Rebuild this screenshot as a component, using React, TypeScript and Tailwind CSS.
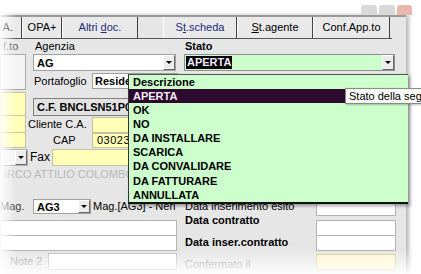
import React from "react";

const font = "font-['Liberation_Sans','Arial',sans-serif]";

function Arrow({ className = "" }: { className?: string }) {
  return (
    <div
      className={`flex w-[12px] shrink-0 items-center justify-center border border-t-white border-l-white border-b-[#6a6a6a] border-r-[#6a6a6a] bg-[#ececec] ${className}`}
    >
      <div className="h-0 w-0 border-x-[3px] border-t-[3px] border-x-transparent border-t-black" />
    </div>
  );
}

function ToolBtn({ className, children }: { className: string; children: React.ReactNode }) {
  return (
    <div
      className={`flex h-full shrink-0 items-center justify-center border-l border-r border-l-white border-r-[#404040] bg-[#e9e9e9] ${className}`}
    >
      <span className="whitespace-pre">{children}</span>
    </div>
  );
}

const statoOptions = [
  "OK",
  "NO",
  "DA INSTALLARE",
  "SCARICA",
  "DA CONVALIDARE",
  "DA FATTURARE",
  "ANNULLATA",
];

export default function App() {
  return (
    <div className={`relative h-[274px] w-[421px] overflow-hidden bg-white text-[11px] leading-none text-black ${font}`}>
      {/* caption buttons */}
      <div className="flex h-[15px] justify-end gap-[2px] pr-[9px] pt-[5px]">
        <div className="h-[10px] w-[16px] rounded-t-[3px] bg-[#d9d9d9]" />
        <div className="h-[10px] w-[16px] rounded-t-[3px] bg-[#d9d9d9]" />
        <div className="h-[10px] w-[15px] rounded-t-[3px] bg-[#e9b7ad]" />
      </div>

      {/* window */}
      <div className="h-[259px] w-[406px] border-t-[2px] border-[#9a9a9a] bg-[#e6e6e6] shadow-[3px_0_4px_rgba(0,0,0,0.28)]">
        {/* toolbar */}
        <div className="flex h-[22px] w-[392px] border-b border-[#555]">
          <ToolBtn className="w-[22px] justify-end pr-[8px]">A.</ToolBtn>
          <ToolBtn className="w-[40px]">OPA+</ToolBtn>
          <ToolBtn className="w-[76px] text-[#232a7a]">
            Altri <span className="underline">d</span>oc.
          </ToolBtn>
          <div className="w-[25px] shrink-0" />
          <ToolBtn className="w-[74px] text-[#232a7a]">
            S<span className="underline">t</span>.scheda
          </ToolBtn>
          <ToolBtn className="w-[76px]">
            <span className="underline">S</span>t.agente
          </ToolBtn>
          <ToolBtn className="w-[77px]">Conf.App.to</ToolBtn>
        </div>

        {/* form */}
        <div className="flex">
          {/* left column */}
          <div className="flex w-[181px] shrink-0 flex-col">
            <div className="flex h-[15px] items-center">
              <span className="w-[33px] pl-[3px] text-[#555]">f.to</span>
              <span className="pl-[2px]">Agenzia</span>
            </div>
            <div className="flex h-[18px]">
              <div className="w-[26px] border-x border-t border-[#a8a8a8] bg-[#f4f4f4]" />
              <div className="ml-[7px] flex h-[17px] w-[143px] border border-[#a0a0a0] bg-white">
                <span className="flex-1 pl-[3px] pt-[3px] font-bold">AG</span>
                <Arrow />
              </div>
            </div>
            <div className="flex h-[18px] items-center">
              <div className="h-full w-[26px] border-x border-b border-[#a8a8a8] bg-[#f4f4f4]" />
              <span className="w-[66px] whitespace-nowrap pl-[8px]">Portafoglio</span>
              <div className="flex h-[16px] w-[86px] items-center border border-[#a0a0a0] bg-white pl-[2px] font-bold">
                Residenziale
              </div>
            </div>
            <div className="mt-[2px] flex h-[24px]">
              <div className="w-[26px] border border-[#c4c4a0] bg-[#ffffb8]" />
              <div className="ml-[7px] mt-[6px] flex h-[18px] w-[110px] items-center border border-[#808080] bg-[#e2e2e2] pl-[3px] font-bold">
                C.F. BNCLSN51P0
              </div>
            </div>
            <div className="flex h-[17px] items-center">
              <div className="h-full w-[26px] border-x border-b border-[#c4c4a0] bg-[#ffffb8]" />
              <span className="w-[66px] pl-[2px]">Cliente C.A.</span>
              <div className="h-[16px] w-[80px] border border-[#c4c4a0] bg-[#ffffb8]" />
            </div>
            <div className="flex h-[15px] items-center">
              <div className="h-full w-[26px] border-x border-b border-[#c4c4a0] bg-[#ffffb8]" />
              <span className="w-[66px] pl-[27px]">CAP</span>
              <div className="flex h-[15px] w-[80px] items-center border border-[#c4c4a0] bg-[#ffffb8] pl-[4px] tracking-[0.5px]">
                03023
              </div>
            </div>
            <div className="flex h-[18px] items-center">
              <div className="flex h-[17px] w-[28px] justify-end border border-[#b0b0b0] bg-[#f4f4f4]">
                <Arrow />
              </div>
              <span className="w-[24px] pl-[2px] text-[12px]">Fax</span>
              <div className="h-[17px] w-[80px] border border-[#c4c4a0] bg-[#ffffb8]" />
            </div>
            <div className="flex h-[16px] items-center pl-[4px] text-[11px] text-[#b9b9b9]">
              IRCO ATTILIO COLOMBO
            </div>
            <div className="h-[16px]" />
            <div className="flex h-[16px] items-center">
              <span className="w-[33px] text-[#444]">Mag.</span>
              <div className="flex h-[15px] w-[58px] border border-[#a0a0a0] bg-white">
                <span className="flex-1 pl-[3px] pt-[2px] font-bold">AG3</span>
                <Arrow />
              </div>
              <span className="pl-[2px]">Mag.[AG3] - Neri</span>
            </div>
            <div className="mt-[6px] h-[16px] w-[177px] border border-[#b4b4b4] bg-white" />
            <div className="h-[15px] w-[177px] border-x border-b border-[#b4b4b4] bg-white" />
            <div className="mt-[2px] flex h-[17px] items-center">
              <span className="w-[48px] pl-[10px] text-[#999]">Note 2</span>
              <div className="h-full w-[129px] border border-[#c0c0c0] bg-white" />
            </div>
          </div>

          {/* right column */}
          <div className="flex flex-col pl-[3px]">
            <div className="flex h-[15px] items-center pl-[1px] font-bold">Stato</div>
            <div className="flex h-[17px] w-[211px] border border-[#909090] bg-[#ccffcc]">
              <div className="flex flex-1 items-center pl-[1px]">
                <span className="bg-black px-[1px] py-[1px] font-bold text-[#f3e9ff]">APERTA</span>
              </div>
              <Arrow />
            </div>
            <div className="h-[127px]" />
            <div className="flex">
              <div className="flex w-[132px] flex-col pt-[1px]">
                <div className="flex h-[14px] items-center pl-[1px]">Data inserimento esito</div>
                <div className="flex h-[14px] items-center pl-[1px] font-bold">Data contratto</div>
                <div className="mt-[8px] flex h-[14px] items-center pl-[1px] font-bold">Data inser.contratto</div>
                <div className="mt-[8px] flex h-[14px] items-center pl-[1px] text-[#999]">Confermato il</div>
              </div>
              <div className="flex w-[80px] flex-col pt-[4px]">
                <div className="h-[14px] border border-[#b4b4b4] bg-white" />
                <div className="mt-[4px] h-[16px] border border-[#b4b4b4] bg-white" />
                <div className="h-[15px] border-x border-b border-[#b4b4b4] bg-white" />
                <div className="mt-[3px] h-[16px] border border-[#d8d0a0] bg-[#fff6cc]" />
              </div>
            </div>
          </div>
        </div>
      </div>

      {/* open drop-down list of Stato */}
      <div className="absolute left-[128px] top-[74px] w-[280px] border-l border-t border-b-[2px] border-l-[#333] border-t-[#555] border-b-[#111] bg-[#ccffcc] font-bold shadow-[2px_2px_3px_rgba(0,0,0,0.35)]">
        <div className="flex h-[14px] items-center pl-[4px]">Descrizione</div>
        <div className="flex h-[14px] items-center bg-[#2c0a2e] pl-[4px] text-[#f6ecff]">APERTA</div>
        {statoOptions.map((o) => (
          <div key={o} className="flex h-[14.2px] items-center pl-[4px]">
            {o}
          </div>
        ))}
      </div>

      {/* tooltip, cut by the window edge as in the capture */}
      <div className="absolute left-[345px] top-[88px] flex h-[16px] w-[76px] items-center overflow-hidden whitespace-nowrap border-y border-l border-[#8a8a8a] bg-[#fbfbf7] pl-[3px] shadow-[1px_1px_2px_rgba(0,0,0,0.25)]">
        Stato della segnalazione
      </div>

      {/* faded edges */}
      <div className="pointer-events-none absolute left-0 top-0 h-full w-[16px] bg-linear-to-r from-white/90 to-white/0" />
      <div className="pointer-events-none absolute bottom-0 left-0 h-[24px] w-full bg-linear-to-b from-white/0 to-white/90" />
    </div>
  );
}
